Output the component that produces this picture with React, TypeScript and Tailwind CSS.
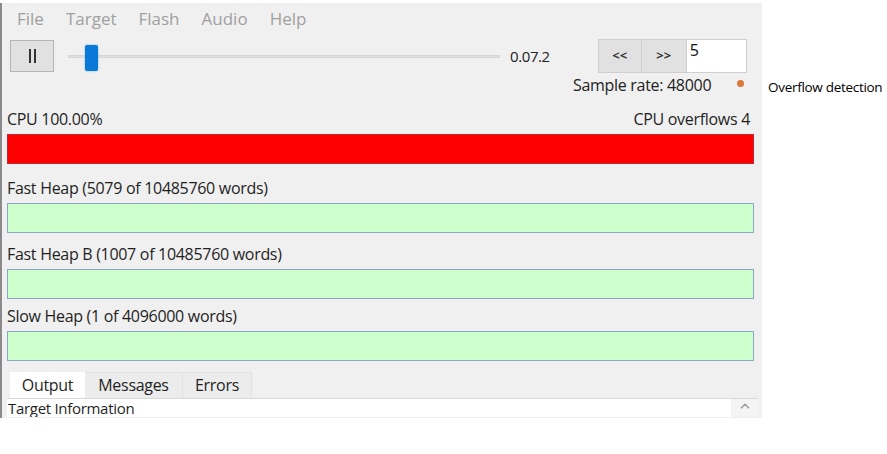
import { ChevronUp } from 'lucide-react';

const font = { fontFamily: '"Open Sans", "Noto Sans", sans-serif' };

interface BarProps {
  label: string;
  right?: string;
  fill: string;
  top: string;
}

function MeterBar({ label, right, fill, top }: BarProps) {
  return (
    <div className={`flex flex-col ${top}`}>
      <div className="flex justify-between h-[22px] items-center text-[16px] text-[#1f1f1f] tracking-[-0.3px]">
        <span>{label}</span>
        {right && <span className="pr-[12px]">{right}</span>}
      </div>
      <div className={`h-[30px] mt-[4px] mr-[8px] border ${fill}`} />
    </div>
  );
}

export default function App() {
  return (
    <div className="w-[887px] h-[454px] bg-white relative overflow-hidden" style={font}>
      <div className="mt-[3px] w-[762px] h-[415px] bg-[#f0f0f0] border-l-2 border-[#8a8a8a] flex flex-col pl-[5px]">
        {/* menu */}
        <div className="flex h-[32px] items-center gap-[22px] pl-[10px] text-[17px] text-[#a0a0a0]">
          <span>File</span>
          <span>Target</span>
          <span>Flash</span>
          <span>Audio</span>
          <span>Help</span>
        </div>

        {/* transport row */}
        <div className="flex items-center h-[36px] mt-[3px]">
          <button className="w-[44px] h-[32px] ml-[3px] bg-[#e1e1e1] border border-[#b5b5b5] flex items-center justify-center gap-[3px]">
            <span className="w-[2px] h-[14px] bg-[#333]" />
            <span className="w-[2px] h-[14px] bg-[#333]" />
          </button>
          <div className="relative ml-[14px] w-[432px] h-[30px] flex items-center">
            <div className="w-full h-[3px] bg-[#e0e0e0] border-y border-[#d6d6d6]" />
            <div className="absolute left-[17px] top-[4px] w-[13px] h-[26px] bg-[#0a78d7] rounded-[2px] shadow-[0_0_2px_#66b3ff]" />
          </div>
          <span className="ml-[10px] text-[15px] text-[#222] tracking-[-0.4px]">0.07.2</span>
          <div className="ml-[48px] flex h-[34px]">
            <button className="w-[44px] bg-[#e1e1e1] border border-[#cfcfcf] text-[13px] font-bold text-[#333]">
              &lt;&lt;
            </button>
            <button className="w-[45px] bg-[#e1e1e1] border-y border-r border-[#cfcfcf] text-[13px] font-bold text-[#333]">
              &gt;&gt;
            </button>
            <div className="w-[60px] bg-white border-y border-r border-[#cfcfcf] pl-[3px] text-[16px] leading-[20px] text-[#111]">
              5
            </div>
          </div>
        </div>

        {/* sample rate */}
        <div className="flex items-center h-[20px] mt-[1px] text-[16px] text-[#222] tracking-[-0.3px]">
          <span className="ml-[566px]">Sample rate: 48000</span>
          <span className="ml-[26px] w-[7px] h-[7px] rounded-full bg-[#d9783a] -mt-[4px]" />
          <span className="absolute left-[768px] top-[77px] text-[13.5px] text-black tracking-[-0.3px]">
            Overflow detection
          </span>
        </div>

        <MeterBar top="mt-[13px]" label="CPU 100.00%" right="CPU overflows 4" fill="bg-[#ff0000] border-[#c0283a]" />
        <MeterBar top="mt-[13px]" label="Fast Heap (5079 of 10485760 words)" fill="bg-[#ccffcc] border-[#8aa6c4]" />
        <MeterBar top="mt-[10px]" label="Fast Heap B (1007 of 10485760 words)" fill="bg-[#ccffcc] border-[#8aa6c4]" />
        <MeterBar top="mt-[6px]" label="Slow Heap (1 of 4096000 words)" fill="bg-[#ccffcc] border-[#8aa6c4]" />

        {/* tabs */}
        <div className="mt-[11px] flex flex-col">
          <div className="flex h-[27px] text-[16px] text-[#1f1f1f] border-b border-[#d9d9d9] mr-[4px] tracking-[-0.3px]">
            <div className="w-[75px] ml-[3px] bg-white flex items-center justify-center">Output</div>
            <div className="w-[98px] bg-[#ececec] border-r border-t border-[#e2e2e2] flex items-end justify-center pb-[1px]">Messages</div>
            <div className="w-[69px] bg-[#ececec] border-r border-t border-[#e2e2e2] flex items-end justify-center pb-[1px]">Errors</div>
          </div>
          <div className="flex h-[18px] bg-white mr-[4px] text-[15px] text-[#1f1f1f] leading-[18px] overflow-hidden tracking-[-0.3px]">
            <span className="flex-1 pl-[1px]">Target Information</span>
            <div className="w-[27px] bg-[#f4f4f4] flex justify-center text-[#a0a0a0]">
              <ChevronUp size={14} strokeWidth={3} />
            </div>
          </div>
        </div>
      </div>
    </div>
  );
}
